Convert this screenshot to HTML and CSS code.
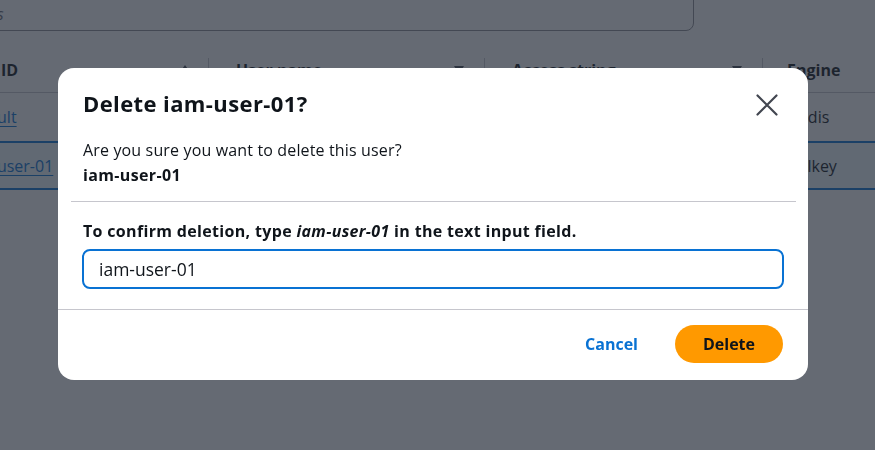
FILE: index.html
```html
<!DOCTYPE html>
<html lang="en">
<head>
<meta charset="utf-8">
<title>Delete user</title>
<link rel="stylesheet" href="styles.css">
</head>
<body>
<div class="page">
  <div class="search"><span class="placeholder">Find users</span></div>
  <div class="table">
    <div class="row head">
      <div class="cell c1"><span>User ID</span><span class="sort up"></span></div>
      <div class="cell c2"><span class="sep"></span><span>User name</span><span class="sort down"></span></div>
      <div class="cell c3"><span class="sep"></span><span>Access string</span><span class="sort down"></span></div>
      <div class="cell c4"><span class="sep"></span><span>Engine</span></div>
    </div>
    <div class="row">
      <div class="cell c1"><a class="link">default</a></div>
      <div class="cell c2">default</div>
      <div class="cell c3">on ~* +@all</div>
      <div class="cell c4">Redis</div>
    </div>
    <div class="row selected">
      <div class="cell c1"><a class="link">iam-user-01</a></div>
      <div class="cell c2">iam-user-01</div>
      <div class="cell c3">on ~* +@all</div>
      <div class="cell c4">Valkey</div>
    </div>
  </div>
</div>

<div class="overlay">
  <div class="modal" role="dialog">
    <div class="modal-header">
      <h2 class="title">Delete iam-user-01?</h2>
      <button class="close" aria-label="Close">
        <svg width="24" height="24" viewBox="0 0 24 24"><path d="M2.5 2.5 L21.5 21.5 M21.5 2.5 L2.5 21.5" stroke="#424650" stroke-width="2.2" fill="none" stroke-linecap="round"/></svg>
      </button>
    </div>
    <div class="modal-body">
      <p class="question">Are you sure you want to delete this user?</p>
      <p class="question strong">iam-user-01</p>
    </div>
    <div class="divider"></div>
    <div class="confirm">
      <label class="confirm-label">To confirm deletion, type <em>iam-user-01</em> in the text input field.</label>
      <div class="input">iam-user-01</div>
    </div>
    <div class="modal-footer">
      <button class="btn-link">Cancel</button>
      <button class="btn-primary">Delete</button>
    </div>
  </div>
</div>
</body>
</html>
```

FILE: styles.css
```css
* { box-sizing: border-box; }
html, body { margin: 0; padding: 0; }
body {
  font-family: "Open Sans", "Noto Sans", Arial, sans-serif;
  color: #0f141a;
  background: #ffffff;
  width: 875px;
  height: 450px;
  overflow: hidden;
}
.page {
  position: relative;
  width: 875px;
  height: 450px;
  overflow: hidden;
}
.search {
  margin-left: -300px;
  width: 994px;
  height: 46px;
  margin-top: -15px;
  border: 1px solid #8c8c94;
  border-radius: 8px;
  display: flex;
  align-items: center;
  padding-left: 231px;
}
.search .placeholder {
  font-style: italic;
  color: #656871;
  font-size: 16px;
  padding-top: 12px;
}
.table {
  margin-top: 17px;
  margin-left: -60px;
}
.row {
  display: grid;
  grid-template-columns: 268px 276px 278px 400px;
  height: 49px;
  border-top: 1px solid #c6c6cd;
  font-size: 16px;
}
.row.head {
  border-top: none;
  height: 44px;
  font-weight: 700;
}
.row.selected {
  border-top: 2px solid #0972d3;
  border-bottom: 2px solid #0972d3;
  background: #f0fbff;
}
.cell {
  display: flex;
  align-items: center;
  padding-left: 24px;
  position: relative;
}
.head .c1 { padding-left: 20px; }
.c2, .c3 { padding-left: 28px; }
.c4 { padding-left: 27px; }
.head .c4 { padding-left: 25px; }
.sep {
  position: absolute;
  left: 0;
  top: 10px;
  width: 1px;
  height: 22px;
  background: #c6c6cd;
}
.sort {
  position: absolute;
  width: 0; height: 0;
  border-left: 5px solid transparent;
  border-right: 5px solid transparent;
}
.sort.up { right: 18px; top: 17px; border-bottom: 7px solid #424650; }
.sort.down { right: 20px; top: 18px; border-top: 8px solid #424650; }
.link {
  color: #0972d3;
  text-decoration: underline;
  text-underline-offset: 3px;
}

.overlay {
  position: fixed;
  inset: 0;
  background: rgba(35, 43, 55, 0.7);
  padding-top: 68px;
  padding-left: 58px;
}
.modal {
  width: 750px;
  height: 312px;
  background: #ffffff;
  border-radius: 16px;
  display: flex;
  flex-direction: column;
  overflow: hidden;
}
.modal-header {
  display: flex;
  justify-content: space-between;
  align-items: flex-start;
  padding: 20px 29px 0 25px;
}
.title {
  margin: 0;
  font-size: 22px;
  line-height: 30px;
  font-weight: 700;
  letter-spacing: 0.4px;
  color: #0f141a;
}
.close {
  border: none;
  background: none;
  padding: 0;
  margin-top: 5px;
  width: 24px;
  height: 24px;
  cursor: pointer;
}
.close svg { display: block; }
.modal-body {
  padding: 20px 25px 13px 25px;
}
.question {
  margin: 0;
  font-size: 16px;
  line-height: 25px;
  letter-spacing: 0.15px;
  color: #0f141a;
}
.question.strong { font-weight: 700; letter-spacing: 0.35px; }
.divider {
  height: 1px;
  background: #c6c6cd;
  margin: 0 12px 0 13px;
}
.confirm {
  padding: 17px 24px 20px 24px;
  display: flex;
  flex-direction: column;
  gap: 6px;
}
.confirm-label {
  font-size: 16px;
  line-height: 24px;
  font-weight: 700;
  letter-spacing: 0.33px;
  padding-left: 1px;
  color: #0f141a;
}
.confirm-label em { font-style: italic; }
.input {
  height: 40px;
  border: 2px solid #0972d3;
  border-radius: 8px;
  padding: 0 15px;
  display: flex;
  align-items: center;
  font-size: 17.5px;
  color: #0f141a;
}
.modal-footer {
  border-top: 1px solid #c6c6cd;
  display: flex;
  justify-content: flex-end;
  align-items: center;
  gap: 17px;
  padding: 15px 25px 16px 25px;
}
.btn-link {
  border: none;
  background: none;
  font-family: inherit;
  font-size: 16px;
  font-weight: 700;
  color: #0972d3;
  padding: 0 20px;
  height: 38px;
}
.btn-primary {
  border: none;
  background: #ff9900;
  color: #0f141a;
  font-family: inherit;
  font-size: 16px;
  font-weight: 700;
  height: 38px;
  width: 108px;
  border-radius: 20px;
}
```
